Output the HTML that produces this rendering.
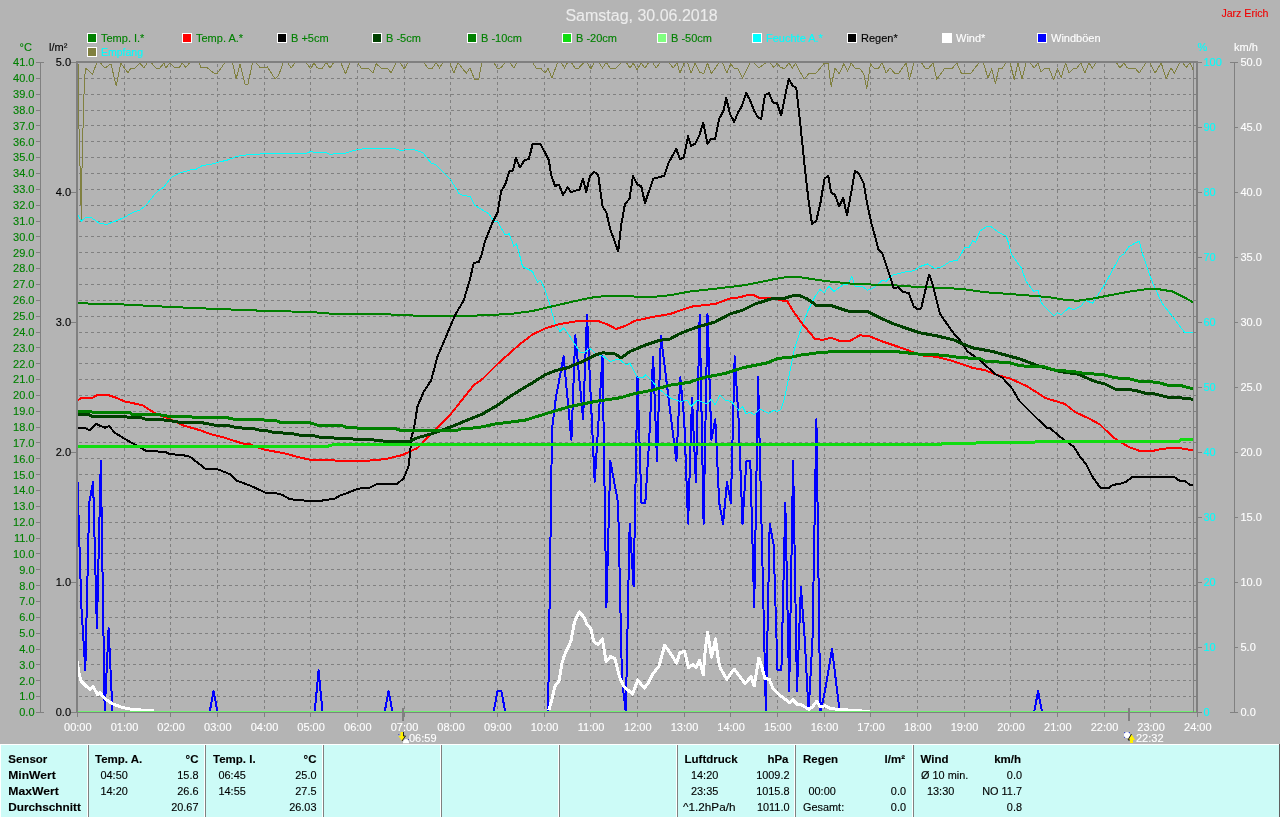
<!DOCTYPE html>
<html lang="de"><head><meta charset="utf-8"><title>Samstag, 30.06.2018</title>
<style>html,body{margin:0;padding:0;background:#b4b4b4;overflow:hidden}body{width:1280px;height:817px;position:relative;font-family:"Liberation Sans",Arial,sans-serif}svg{position:absolute;left:0;top:0;display:block;will-change:transform}text{font-family:"Liberation Sans",Arial,sans-serif;font-size:11px;stroke-width:.12px}.b{font-weight:bold;font-size:11.5px}.p{font-size:10.9px}</style></head><body>
<svg width="1280" height="817" viewBox="0 0 1280 817">
<rect x="0" y="0" width="1280" height="817" fill="#b4b4b4"/>
<g shape-rendering="crispEdges" stroke="#808080" stroke-width="1" fill="none">
<g stroke-dasharray="3 3">
<line x1="79" y1="696.5" x2="1191" y2="696.5"/>
<line x1="79" y1="680.5" x2="1191" y2="680.5"/>
<line x1="79" y1="664.5" x2="1191" y2="664.5"/>
<line x1="79" y1="649.5" x2="1191" y2="649.5"/>
<line x1="79" y1="633.5" x2="1191" y2="633.5"/>
<line x1="79" y1="617.5" x2="1191" y2="617.5"/>
<line x1="79" y1="601.5" x2="1191" y2="601.5"/>
<line x1="79" y1="585.5" x2="1191" y2="585.5"/>
<line x1="79" y1="569.5" x2="1191" y2="569.5"/>
<line x1="79" y1="553.5" x2="1191" y2="553.5"/>
<line x1="79" y1="538.5" x2="1191" y2="538.5"/>
<line x1="79" y1="522.5" x2="1191" y2="522.5"/>
<line x1="79" y1="506.5" x2="1191" y2="506.5"/>
<line x1="79" y1="490.5" x2="1191" y2="490.5"/>
<line x1="79" y1="474.5" x2="1191" y2="474.5"/>
<line x1="79" y1="458.5" x2="1191" y2="458.5"/>
<line x1="79" y1="442.5" x2="1191" y2="442.5"/>
<line x1="79" y1="427.5" x2="1191" y2="427.5"/>
<line x1="79" y1="411.5" x2="1191" y2="411.5"/>
<line x1="79" y1="395.5" x2="1191" y2="395.5"/>
<line x1="79" y1="379.5" x2="1191" y2="379.5"/>
<line x1="79" y1="363.5" x2="1191" y2="363.5"/>
<line x1="79" y1="347.5" x2="1191" y2="347.5"/>
<line x1="79" y1="332.5" x2="1191" y2="332.5"/>
<line x1="79" y1="316.5" x2="1191" y2="316.5"/>
<line x1="79" y1="300.5" x2="1191" y2="300.5"/>
<line x1="79" y1="284.5" x2="1191" y2="284.5"/>
<line x1="79" y1="268.5" x2="1191" y2="268.5"/>
<line x1="79" y1="252.5" x2="1191" y2="252.5"/>
<line x1="79" y1="236.5" x2="1191" y2="236.5"/>
<line x1="79" y1="221.5" x2="1191" y2="221.5"/>
<line x1="79" y1="205.5" x2="1191" y2="205.5"/>
<line x1="79" y1="189.5" x2="1191" y2="189.5"/>
<line x1="79" y1="173.5" x2="1191" y2="173.5"/>
<line x1="79" y1="157.5" x2="1191" y2="157.5"/>
<line x1="79" y1="141.5" x2="1191" y2="141.5"/>
<line x1="79" y1="125.5" x2="1191" y2="125.5"/>
<line x1="79" y1="110.5" x2="1191" y2="110.5"/>
<line x1="79" y1="94.5" x2="1191" y2="94.5"/>
<line x1="79" y1="78.5" x2="1191" y2="78.5"/>
<line x1="124.5" y1="64" x2="124.5" y2="711"/>
<line x1="170.5" y1="64" x2="170.5" y2="711"/>
<line x1="217.5" y1="64" x2="217.5" y2="711"/>
<line x1="264.5" y1="64" x2="264.5" y2="711"/>
<line x1="310.5" y1="64" x2="310.5" y2="711"/>
<line x1="357.5" y1="64" x2="357.5" y2="711"/>
<line x1="404.5" y1="64" x2="404.5" y2="711"/>
<line x1="450.5" y1="64" x2="450.5" y2="711"/>
<line x1="497.5" y1="64" x2="497.5" y2="711"/>
<line x1="544.5" y1="64" x2="544.5" y2="711"/>
<line x1="590.5" y1="64" x2="590.5" y2="711"/>
<line x1="637.5" y1="64" x2="637.5" y2="711"/>
<line x1="684.5" y1="64" x2="684.5" y2="711"/>
<line x1="730.5" y1="64" x2="730.5" y2="711"/>
<line x1="777.5" y1="64" x2="777.5" y2="711"/>
<line x1="824.5" y1="64" x2="824.5" y2="711"/>
<line x1="870.5" y1="64" x2="870.5" y2="711"/>
<line x1="917.5" y1="64" x2="917.5" y2="711"/>
<line x1="964.5" y1="64" x2="964.5" y2="711"/>
<line x1="1010.5" y1="64" x2="1010.5" y2="711"/>
<line x1="1057.5" y1="64" x2="1057.5" y2="711"/>
<line x1="1104.5" y1="64" x2="1104.5" y2="711"/>
<line x1="1150.5" y1="64" x2="1150.5" y2="711"/>
</g>
</g>
<g id="curves" shape-rendering="crispEdges">
<polyline points="78.0,62.5 78.8,121.0 79.9,161.0 81.4,219.5 82.1,161.0 83.2,121.0 84.3,84.0 85.4,68.0 92.5,74.0 97.0,62.5 100.0,62.5 105.0,68.0 111.0,63.8 116.2,86.0 120.8,63.0 128.0,73.0 131.0,68.0 135.0,68.0 140.0,63.0 143.8,68.0 147.5,62.5 151.0,62.5 156.0,68.0 160.0,68.0 163.8,63.0 166.0,68.0 170.0,62.5 173.8,67.0 178.8,68.0 182.5,63.0 185.8,67.5 190.0,62.5 198.8,62.5 201.0,67.5 207.5,68.0 213.8,73.0 217.5,73.0 225.0,62.5 232.5,62.5 236.2,78.8 240.0,63.8 245.0,84.2 248.0,84.2 252.5,62.5 256.0,62.5 260.0,67.5 265.0,68.0 267.5,67.0 275.0,78.8 278.8,75.0 283.2,62.5 287.5,62.5 291.2,68.0 295.0,62.5 306.0,62.5 310.8,68.8 313.8,63.0 317.5,68.0 322.5,68.0 326.2,62.5 330.0,68.0 333.8,62.5 341.0,63.0 345.5,73.8 350.0,62.5 357.5,62.5 361.2,68.0 368.8,68.8 373.0,73.2 376.2,63.8 381.2,68.0 387.5,68.0 391.2,73.0 396.2,62.5 400.0,62.5 404.2,68.8 408.0,62.5 423.8,62.5 428.0,68.0 432.5,68.0 436.2,62.5 439.5,68.0 443.0,62.5 450.0,63.0 453.8,73.0 458.0,62.5 466.2,73.2 470.0,68.0 474.5,79.2 478.8,79.2 481.8,62.5 493.8,62.5 497.5,68.8 501.2,67.5 505.0,62.5 510.0,62.5 513.8,68.0 517.0,62.5 532.5,62.5 536.2,68.0 541.2,68.8 545.0,73.2 548.0,68.0 551.8,78.0 557.5,63.0 561.2,62.5 564.5,68.0 567.5,62.5 571.2,62.5 575.0,68.0 578.8,68.0 583.8,62.5 587.5,63.0 590.8,68.8 594.2,62.5 598.8,62.5 602.5,68.0 606.2,62.5 610.0,68.0 616.2,68.0 621.2,62.5 626.2,62.5 630.0,68.0 633.2,63.0 637.0,69.5 641.2,63.0 645.0,68.0 648.8,62.5 652.5,62.5 656.2,68.0 660.0,62.5 668.8,62.5 673.2,68.0 677.0,63.0 680.0,73.0 684.2,63.0 687.5,62.5 691.2,73.0 695.0,63.0 699.5,72.0 703.8,73.8 707.5,63.0 711.2,73.8 718.8,63.0 722.5,62.5 726.8,73.0 730.8,63.8 733.8,68.0 738.0,68.8 742.5,78.0 750.0,63.0 753.8,62.5 758.8,68.0 766.2,62.5 770.0,62.5 773.8,67.5 777.5,63.0 780.0,67.0 784.5,68.8 788.8,63.0 792.5,68.0 795.5,63.0 798.8,70.0 804.2,78.8 808.8,73.8 816.2,73.0 823.8,63.8 828.0,63.0 831.2,86.2 835.0,68.0 839.2,73.8 843.8,63.8 847.5,71.2 851.2,63.0 855.0,68.0 859.2,68.0 863.8,73.8 866.8,88.8 870.5,63.8 873.8,68.0 878.8,68.0 882.0,62.5 886.2,73.0 890.0,68.0 894.5,73.0 898.2,73.8 906.2,63.0 909.5,79.2 913.8,63.0 921.2,62.5 925.0,68.0 928.8,68.0 933.0,63.0 936.8,79.2 945.0,68.0 952.5,68.0 956.8,63.0 961.2,73.0 971.2,73.0 978.8,63.0 983.2,62.5 988.0,78.0 991.8,68.8 995.5,83.8 998.8,68.0 1002.5,68.0 1006.2,62.5 1010.0,62.5 1014.2,79.2 1018.0,63.0 1022.0,78.8 1026.2,62.5 1030.0,62.5 1034.2,68.0 1038.0,63.0 1041.2,72.0 1045.0,68.0 1049.2,68.8 1053.8,80.0 1057.5,68.8 1061.2,77.5 1065.5,63.0 1069.2,73.0 1073.0,68.8 1076.8,68.0 1080.8,63.0 1085.0,73.0 1088.8,63.0 1092.5,68.0 1096.2,62.5 1116.2,62.5 1120.0,68.0 1123.8,63.0 1127.5,68.0 1135.0,68.0 1139.2,73.0 1146.2,62.5 1150.0,62.5 1155.0,73.0 1161.2,63.0 1166.2,78.8 1170.8,68.0 1174.5,73.0 1180.0,62.5 1182.5,62.5 1186.2,67.5 1190.0,62.5 1193.8,71.2" fill="none" stroke="#808040" stroke-width="1" stroke-linejoin="round" />
<polyline points="77.5,481.9 81.4,607.4 85.3,670.2 89.2,502.8 93.1,481.9 96.9,628.3 100.8,461.0 104.7,712.0 108.6,628.3 112.5,712.0" fill="none" stroke="#0000ff" stroke-width="2" stroke-linejoin="round" stroke-linejoin="miter"/>
<polyline points="209.7,712.0 213.6,691.1 217.5,712.0" fill="none" stroke="#0000ff" stroke-width="2" stroke-linejoin="round" stroke-linejoin="miter"/>
<polyline points="314.7,712.0 318.6,670.2 322.5,712.0" fill="none" stroke="#0000ff" stroke-width="2" stroke-linejoin="round" stroke-linejoin="miter"/>
<polyline points="384.7,712.0 388.6,691.1 392.5,712.0" fill="none" stroke="#0000ff" stroke-width="2" stroke-linejoin="round" stroke-linejoin="miter"/>
<polyline points="493.6,712.0 497.5,691.1 501.4,691.1 505.3,712.0" fill="none" stroke="#0000ff" stroke-width="2" stroke-linejoin="round" stroke-linejoin="miter"/>
<polyline points="548.1,712.0 552.0,429.6 555.8,398.2 559.7,377.3 563.6,356.4 567.5,398.2 571.4,440.0 575.3,335.4 579.2,377.3 583.1,419.1 587.0,314.5 590.8,398.2 594.7,481.9 598.6,419.1 602.5,356.4 606.4,607.4 610.3,461.0 614.2,481.9 618.1,502.8 622.0,680.6 625.8,712.0 629.7,523.7 633.6,586.5 637.5,377.3 641.4,502.8 645.3,502.8 649.2,440.0 653.1,356.4 657.0,461.0 660.9,335.4 664.7,366.8 668.6,398.2 672.5,429.6 676.4,461.0 680.3,377.3 684.2,419.1 688.1,523.7 692.0,398.2 695.9,481.9 699.7,314.5 703.6,523.7 707.5,314.5 711.4,440.0 715.3,419.1 719.2,502.8 723.1,523.7 727.0,481.9 730.9,502.8 734.7,356.4 738.6,419.1 742.5,523.7 746.4,461.0 750.3,461.0 754.2,607.4 758.1,377.3 762.0,544.6 765.9,712.0 769.7,523.7 773.6,544.6 777.5,670.2 781.4,670.2 785.3,502.8 789.2,691.1 793.1,461.0 797.0,691.1 800.9,586.5 804.7,638.8 808.6,712.0 812.5,638.8 816.4,419.1 820.3,712.0 824.2,695.3 828.1,672.3 832.0,649.2 835.9,680.6 839.7,712.0" fill="none" stroke="#0000ff" stroke-width="2" stroke-linejoin="round" stroke-linejoin="miter"/>
<polyline points="1034.2,712.0 1038.1,691.1 1042.0,712.0" fill="none" stroke="#0000ff" stroke-width="2" stroke-linejoin="round" stroke-linejoin="miter"/>
<polyline points="77.0,661.2 78.8,672.5 81.2,681.2 86.2,686.2 90.0,689.5 93.0,686.2 97.5,694.5 100.0,692.5 105.0,698.8 112.5,703.8 122.5,707.5 132.5,709.5 153.8,710.8" fill="none" stroke="#ffffff" stroke-width="3" stroke-linejoin="round" />
<polyline points="548.8,710.2 551.8,700.0 554.7,686.7 559.1,680.8 562.0,663.2 564.2,655.8 570.9,641.0 574.5,622.0 579.4,611.8 584.1,617.6 587.0,624.2 590.7,628.0 593.6,641.0 598.0,644.8 602.4,639.0 606.1,661.7 610.5,656.6 614.9,658.8 619.3,676.4 623.8,686.7 632.6,694.0 637.7,680.0 644.3,688.2 648.7,682.3 653.1,673.5 659.0,666.1 664.6,645.5 669.3,651.4 676.6,663.2 679.6,652.9 684.7,651.4 688.4,667.6 692.9,664.6 695.9,667.6 699.5,660.2 703.2,675.0 705.4,648.5 707.6,632.3 711.6,657.3 715.4,639.0 718.6,661.7 720.1,667.6 726.7,679.3 734.1,669.0 745.1,683.8 751.0,676.4 754.2,686.0 758.8,658.0 762.0,667.6 764.9,678.6 769.3,679.3 773.0,688.2 778.2,694.0 784.0,698.4 789.9,702.9 792.9,699.9 797.3,704.3 801.7,705.0 809.0,709.5 812.7,706.5 816.7,701.4 820.0,706.5 825.2,705.8 831.0,708.7 850.0,710.2 870.0,711.5" fill="none" stroke="#ffffff" stroke-width="3" stroke-linejoin="round" />
<polyline points="77.0,212.5 81.2,221.2 86.2,217.0 91.2,217.5 100.0,223.8 107.5,224.2 115.0,221.2 124.2,217.5 132.5,212.5 140.0,210.0 146.2,205.0 156.2,192.5 163.8,187.0 171.2,177.5 180.0,173.0 190.0,170.0 196.2,169.2 202.5,165.5 210.0,164.5 217.5,162.5 227.5,160.0 237.5,156.2 250.0,154.5 264.2,153.8 285.0,153.2 306.2,153.2 310.8,151.5 315.0,152.5 326.2,152.5 330.8,155.0 335.0,153.2 345.0,153.2 357.5,149.5 370.0,148.0 393.8,148.0 400.0,150.5 407.5,149.5 415.0,150.0 422.5,152.5 431.2,163.0 436.2,165.0 450.8,180.0 458.8,193.2 463.8,195.8 470.0,196.2 475.0,205.5 482.5,210.0 488.8,213.8 493.8,221.2 497.5,221.2 505.0,235.0 509.2,233.8 513.8,246.2 516.2,243.8 517.5,246.5 522.5,266.5 532.5,271.5 537.5,282.0 540.8,280.2 545.0,290.2 550.0,305.2 555.0,323.5 560.0,331.5 563.8,327.8 570.0,336.5 580.0,352.2 585.0,352.2 590.0,348.5 596.2,354.0 603.8,356.5 610.0,361.5 618.8,359.0 626.2,364.8 630.0,363.5 637.5,377.8 642.5,377.8 645.8,374.8 652.5,381.5 657.5,387.8 670.0,397.8 680.0,401.5 687.5,400.2 691.2,406.5 697.5,400.2 707.5,404.0 711.2,399.0 715.0,404.8 720.0,395.2 725.0,400.2 731.2,401.5 738.8,410.2 742.5,406.5 746.2,414.0 750.0,412.0 754.2,414.8 760.0,409.0 768.8,413.2 773.8,410.2 777.5,411.5 781.2,409.0 785.0,396.5 790.0,371.5 793.8,351.5 800.0,331.5 807.5,311.5 815.0,296.5 820.0,289.5 824.2,292.8 828.8,286.5 833.8,291.5 842.5,285.2 848.0,284.0 851.8,276.5 855.0,286.0 862.5,286.5 867.5,290.2 873.8,287.8 882.5,280.2 886.2,281.5 892.5,275.2 905.0,272.0 913.8,270.8 920.0,266.5 927.5,264.0 935.0,268.5 942.5,266.5 950.0,261.5 957.5,260.2 961.2,254.0 965.0,247.0 968.8,247.8 972.5,241.0 975.5,242.2 980.0,231.0 986.2,226.8 991.2,226.8 998.8,232.5 1006.2,236.2 1008.8,243.8 1011.2,254.0 1021.2,267.8 1026.2,281.5 1033.8,291.5 1038.0,290.2 1041.2,302.8 1053.8,316.0 1057.5,312.8 1061.2,314.8 1068.8,307.8 1073.8,309.5 1081.2,306.0 1085.0,300.2 1092.5,303.2 1105.0,284.0 1120.0,256.5 1123.8,254.0 1128.8,246.8 1135.0,243.2 1139.2,241.2 1142.5,254.0 1143.8,257.8 1152.5,282.8 1162.5,304.0 1172.5,316.5 1180.0,326.5 1185.0,332.8 1193.0,332.8" fill="none" stroke="#00ffff" stroke-width="1" stroke-linejoin="round" />
<polyline points="77.0,303.2 124.2,304.5 170.8,307.0 217.5,309.0 264.2,310.8 310.8,312.0 335.0,314.0 380.0,314.0 420.0,315.8 470.0,315.8 510.0,314.0 532.5,311.0 560.0,304.5 590.0,297.8 607.5,295.8 652.5,297.0 670.0,295.2 690.0,291.5 712.5,289.0 745.0,285.2 775.0,279.0 790.0,276.5 800.0,277.2 825.0,281.0 855.0,284.0 892.5,285.2 917.5,287.0 942.5,287.8 962.5,289.0 985.0,292.2 1010.0,294.0 1047.5,297.0 1065.0,299.8 1077.5,300.8 1095.0,298.2 1110.0,295.2 1130.0,291.5 1147.5,289.0 1157.5,289.0 1172.5,291.5 1185.0,297.8 1193.8,302.8" fill="none" stroke="#008000" stroke-width="2" stroke-linejoin="round" />
<polyline points="77.0,401.0 81.2,397.8 92.5,397.8 97.5,394.8 107.5,394.8 116.2,397.8 125.0,401.5 142.5,405.2 156.2,414.0 170.0,419.0 182.5,425.2 200.0,430.2 210.0,434.0 225.0,437.8 242.5,443.5 250.0,444.2 262.5,449.2 285.0,453.5 300.0,457.5 310.0,459.8 335.0,460.5 370.0,460.5 385.0,459.2 402.5,455.0 417.5,448.0 433.8,431.5 450.8,414.0 473.8,385.2 482.5,379.0 497.5,364.0 520.0,344.0 532.5,334.5 545.0,328.5 560.0,324.0 575.0,321.5 597.5,320.8 607.5,324.5 616.2,329.0 625.0,326.0 635.0,320.8 652.5,317.0 670.0,314.0 690.0,307.2 692.5,306.5 715.0,304.0 730.0,298.5 740.0,297.2 747.5,295.2 753.8,295.2 760.0,298.2 775.0,297.8 780.0,300.2 787.5,301.5 792.5,310.2 802.5,324.0 815.0,339.0 822.5,339.8 831.2,337.8 840.0,341.0 848.8,341.5 860.0,335.2 870.0,336.5 882.5,341.5 897.5,346.5 910.0,351.0 920.0,355.2 937.5,357.0 952.5,361.0 960.0,363.5 972.5,367.8 985.0,370.2 997.5,375.2 1010.0,378.5 1027.5,386.5 1045.0,397.8 1055.0,401.0 1065.0,404.0 1075.0,412.0 1090.0,419.0 1100.0,424.5 1112.5,436.8 1120.0,441.8 1130.0,447.5 1140.0,451.0 1152.5,451.0 1160.0,449.2 1170.0,448.0 1180.0,448.0 1185.0,449.2 1193.8,450.0" fill="none" stroke="#ff0000" stroke-width="2" stroke-linejoin="round" />
<polyline points="77.0,428.2 85.0,428.2 90.0,430.2 96.2,424.0 105.0,427.8 108.8,426.0 115.0,432.8 125.0,439.0 133.8,444.0 146.2,451.0 165.0,451.8 170.0,454.2 182.5,455.0 190.0,456.8 205.0,468.5 217.5,469.2 230.0,474.2 236.2,480.5 250.0,485.5 265.0,492.5 275.0,493.0 282.5,495.0 290.0,499.2 303.8,500.5 322.5,500.5 335.0,498.5 340.0,495.5 347.5,493.0 357.5,488.8 370.0,487.5 377.5,483.8 397.5,483.8 403.8,478.0 408.8,465.5 410.8,445.5 411.2,438.0 413.8,429.0 417.5,406.5 423.8,391.5 431.2,380.2 437.5,356.5 445.0,339.0 455.0,315.2 463.8,300.2 470.0,279.0 473.8,262.8 478.8,262.0 481.8,254.0 485.0,241.2 492.5,222.5 497.5,212.5 501.2,191.2 505.0,185.0 509.5,171.2 513.0,170.5 515.8,158.0 520.0,167.5 524.5,160.0 528.8,159.2 532.5,144.5 540.5,144.0 548.8,160.0 551.2,175.0 555.0,185.8 559.2,185.0 563.0,195.0 567.5,187.5 571.2,192.0 579.5,189.5 583.0,178.8 586.2,192.0 590.0,176.2 594.2,171.8 598.2,175.0 602.5,206.2 606.2,212.0 610.5,230.0 618.2,251.2 621.2,225.0 625.0,203.8 629.5,198.8 633.0,176.2 637.5,184.5 641.2,186.2 645.0,203.0 653.2,178.8 664.2,175.8 668.8,162.5 676.2,148.8 680.0,159.2 683.8,157.5 688.0,136.2 691.2,145.8 695.0,143.8 699.5,135.0 703.2,122.5 707.5,143.8 711.2,138.8 715.0,139.5 719.2,118.8 723.8,110.0 726.2,98.0 730.0,113.8 734.2,122.0 738.0,112.5 741.2,107.5 746.2,93.0 750.0,100.0 753.8,110.0 758.0,117.5 761.2,118.8 765.0,95.0 768.8,93.0 773.0,102.5 777.0,103.0 781.2,115.5 785.0,96.2 788.8,78.8 793.0,86.2 796.2,87.5 798.8,110.0 802.5,145.0 805.0,170.0 808.8,202.5 812.0,223.8 816.2,221.2 820.5,202.5 824.5,178.8 828.2,175.8 831.2,192.5 835.0,195.0 839.2,206.2 843.2,198.0 847.0,215.5 851.2,192.5 855.0,170.8 858.8,173.8 863.8,183.8 867.0,202.5 871.2,222.5 875.0,236.2 878.2,248.8 882.5,254.0 890.0,276.5 893.8,288.5 898.2,287.0 902.5,291.5 908.8,293.2 913.8,306.5 917.5,309.0 921.2,308.5 925.0,291.5 929.2,274.5 932.5,284.0 940.0,314.0 955.0,335.2 960.0,340.2 967.5,351.5 980.0,360.2 995.0,374.0 1002.5,377.8 1012.5,389.0 1018.8,400.2 1032.5,414.0 1046.2,427.5 1050.0,428.0 1060.0,436.8 1073.8,446.8 1080.0,456.8 1086.2,464.2 1092.5,476.8 1100.5,488.0 1108.8,488.0 1112.5,485.0 1120.0,483.8 1126.2,481.8 1132.5,476.8 1173.8,476.8 1180.0,481.0 1185.0,481.0 1190.0,485.0 1193.8,485.0" fill="none" stroke="#000000" stroke-width="2" stroke-linejoin="round" />
<polyline points="77.0,414.0 87.5,414.0 92.5,416.5 140.0,417.2 145.0,419.0 167.5,420.2 177.5,422.0 202.5,422.8 215.0,425.2 230.0,426.0 237.5,427.8 252.5,428.5 260.0,430.2 267.5,430.8 275.0,432.8 290.0,433.2 300.0,435.2 315.0,436.0 322.5,437.8 345.0,438.2 352.5,439.0 370.0,439.5 382.5,441.0 410.0,441.0 417.5,437.8 435.0,432.8 455.0,425.2 470.0,419.0 482.5,414.0 497.5,405.2 510.0,396.5 520.0,390.2 532.5,382.8 545.0,374.8 555.0,370.8 567.5,367.8 582.5,361.5 595.0,355.2 602.5,352.8 615.0,354.0 621.2,357.8 630.0,351.5 645.0,345.2 660.0,340.2 670.0,339.0 680.0,333.5 695.0,327.8 715.0,322.0 730.0,314.0 742.5,310.2 755.0,304.0 772.5,298.5 785.0,298.2 792.5,295.8 800.0,295.8 807.5,299.0 816.2,305.2 832.5,306.0 847.5,311.0 867.5,311.5 880.0,317.8 892.5,323.5 905.0,327.8 920.0,332.8 937.5,336.0 955.0,340.2 960.0,342.8 972.5,347.8 992.5,351.5 1020.0,359.0 1040.0,366.5 1060.0,371.5 1077.5,374.0 1095.0,381.5 1105.0,384.0 1115.0,389.0 1135.0,390.2 1145.0,393.2 1155.0,394.0 1167.5,397.2 1190.0,398.5 1193.8,400.2" fill="none" stroke="#004000" stroke-width="3" stroke-linejoin="round" />
<polyline points="77.0,411.5 90.0,411.5 95.0,412.8 130.0,412.8 132.5,414.8 160.0,414.8 170.0,416.5 200.0,417.2 225.0,417.2 235.0,419.5 275.0,420.2 280.0,422.2 310.0,422.8 317.5,425.2 342.5,425.8 347.5,427.8 380.0,428.5 395.0,428.5 400.0,430.2 457.5,430.2 462.5,428.5 477.5,427.8 495.0,424.0 525.0,420.2 545.0,414.0 570.0,406.5 595.0,401.5 620.0,397.8 635.0,393.5 652.5,390.2 670.0,385.2 690.0,382.2 692.5,381.0 705.0,377.2 725.0,373.5 742.5,367.8 767.5,362.8 777.5,358.5 792.5,357.0 800.0,355.2 817.5,352.8 835.0,351.5 895.0,351.5 917.5,354.0 942.5,355.2 962.5,357.8 980.0,358.5 985.0,361.0 1010.0,362.8 1020.0,365.8 1045.0,367.0 1055.0,370.2 1072.5,371.5 1085.0,373.5 1102.5,374.5 1115.0,377.8 1130.0,379.0 1140.0,381.5 1157.5,382.2 1167.5,385.2 1182.5,386.0 1193.8,389.0" fill="none" stroke="#008000" stroke-width="3" stroke-linejoin="round" />
<polyline points="77.0,446.2 328.0,446.2 332.0,445.0 400.0,444.8 940.0,444.8 942.0,443.3 1034.0,442.5 1036.0,441.5 1179.0,441.3 1181.0,439.5 1193.8,439.5" fill="none" stroke="#10dc10" stroke-width="3" stroke-linejoin="round" />
</g>
<g shape-rendering="crispEdges" fill="#808080" stroke="none">
<rect x="76" y="61" width="2" height="652"/>
<rect x="76" y="61" width="1122" height="2"/>
<rect x="1196" y="61" width="2" height="652"/>
<rect x="76" y="712" width="1122" height="1"/>
<rect x="78" y="711" width="1118" height="1" fill="#70ee70"/>
<rect x="1193" y="63" width="1" height="649"/>
<rect x="1193" y="712" width="3" height="1"/>
<rect x="36" y="712" width="8" height="1"/>
<rect x="1193" y="696" width="3" height="1"/>
<rect x="36" y="696" width="4" height="1"/>
<rect x="1193" y="680" width="3" height="1"/>
<rect x="36" y="680" width="4" height="1"/>
<rect x="1193" y="664" width="3" height="1"/>
<rect x="36" y="664" width="4" height="1"/>
<rect x="1193" y="649" width="3" height="1"/>
<rect x="36" y="649" width="4" height="1"/>
<rect x="1193" y="633" width="3" height="1"/>
<rect x="36" y="633" width="4" height="1"/>
<rect x="1193" y="617" width="3" height="1"/>
<rect x="36" y="617" width="4" height="1"/>
<rect x="1193" y="601" width="3" height="1"/>
<rect x="36" y="601" width="4" height="1"/>
<rect x="1193" y="585" width="3" height="1"/>
<rect x="36" y="585" width="4" height="1"/>
<rect x="1193" y="569" width="3" height="1"/>
<rect x="36" y="569" width="4" height="1"/>
<rect x="1193" y="553" width="3" height="1"/>
<rect x="36" y="553" width="4" height="1"/>
<rect x="1193" y="538" width="3" height="1"/>
<rect x="36" y="538" width="4" height="1"/>
<rect x="1193" y="522" width="3" height="1"/>
<rect x="36" y="522" width="4" height="1"/>
<rect x="1193" y="506" width="3" height="1"/>
<rect x="36" y="506" width="4" height="1"/>
<rect x="1193" y="490" width="3" height="1"/>
<rect x="36" y="490" width="4" height="1"/>
<rect x="1193" y="474" width="3" height="1"/>
<rect x="36" y="474" width="4" height="1"/>
<rect x="1193" y="458" width="3" height="1"/>
<rect x="36" y="458" width="4" height="1"/>
<rect x="1193" y="442" width="3" height="1"/>
<rect x="36" y="442" width="4" height="1"/>
<rect x="1193" y="427" width="3" height="1"/>
<rect x="36" y="427" width="4" height="1"/>
<rect x="1193" y="411" width="3" height="1"/>
<rect x="36" y="411" width="4" height="1"/>
<rect x="1193" y="395" width="3" height="1"/>
<rect x="36" y="395" width="4" height="1"/>
<rect x="1193" y="379" width="3" height="1"/>
<rect x="36" y="379" width="4" height="1"/>
<rect x="1193" y="363" width="3" height="1"/>
<rect x="36" y="363" width="4" height="1"/>
<rect x="1193" y="347" width="3" height="1"/>
<rect x="36" y="347" width="4" height="1"/>
<rect x="1193" y="332" width="3" height="1"/>
<rect x="36" y="332" width="4" height="1"/>
<rect x="1193" y="316" width="3" height="1"/>
<rect x="36" y="316" width="4" height="1"/>
<rect x="1193" y="300" width="3" height="1"/>
<rect x="36" y="300" width="4" height="1"/>
<rect x="1193" y="284" width="3" height="1"/>
<rect x="36" y="284" width="4" height="1"/>
<rect x="1193" y="268" width="3" height="1"/>
<rect x="36" y="268" width="4" height="1"/>
<rect x="1193" y="252" width="3" height="1"/>
<rect x="36" y="252" width="4" height="1"/>
<rect x="1193" y="236" width="3" height="1"/>
<rect x="36" y="236" width="4" height="1"/>
<rect x="1193" y="221" width="3" height="1"/>
<rect x="36" y="221" width="4" height="1"/>
<rect x="1193" y="205" width="3" height="1"/>
<rect x="36" y="205" width="4" height="1"/>
<rect x="1193" y="189" width="3" height="1"/>
<rect x="36" y="189" width="4" height="1"/>
<rect x="1193" y="173" width="3" height="1"/>
<rect x="36" y="173" width="4" height="1"/>
<rect x="1193" y="157" width="3" height="1"/>
<rect x="36" y="157" width="4" height="1"/>
<rect x="1193" y="141" width="3" height="1"/>
<rect x="36" y="141" width="4" height="1"/>
<rect x="1193" y="125" width="3" height="1"/>
<rect x="36" y="125" width="4" height="1"/>
<rect x="1193" y="110" width="3" height="1"/>
<rect x="36" y="110" width="4" height="1"/>
<rect x="1193" y="94" width="3" height="1"/>
<rect x="36" y="94" width="4" height="1"/>
<rect x="1193" y="78" width="3" height="1"/>
<rect x="36" y="78" width="4" height="1"/>
<rect x="1193" y="62" width="3" height="1"/>
<rect x="36" y="62" width="8" height="1"/>
<rect x="40" y="62" width="1" height="651"/>
<rect x="71" y="62" width="5" height="1"/>
<rect x="71" y="192" width="5" height="1"/>
<rect x="71" y="322" width="5" height="1"/>
<rect x="71" y="452" width="5" height="1"/>
<rect x="71" y="582" width="5" height="1"/>
<rect x="71" y="712" width="5" height="1"/>
<rect x="1198" y="62" width="4" height="1"/>
<rect x="1230" y="62" width="8" height="1"/>
<rect x="1198" y="127" width="4" height="1"/>
<rect x="1234" y="127" width="4" height="1"/>
<rect x="1198" y="192" width="4" height="1"/>
<rect x="1234" y="192" width="4" height="1"/>
<rect x="1198" y="257" width="4" height="1"/>
<rect x="1234" y="257" width="4" height="1"/>
<rect x="1198" y="322" width="4" height="1"/>
<rect x="1234" y="322" width="4" height="1"/>
<rect x="1198" y="387" width="4" height="1"/>
<rect x="1234" y="387" width="4" height="1"/>
<rect x="1198" y="452" width="4" height="1"/>
<rect x="1234" y="452" width="4" height="1"/>
<rect x="1198" y="517" width="4" height="1"/>
<rect x="1234" y="517" width="4" height="1"/>
<rect x="1198" y="582" width="4" height="1"/>
<rect x="1234" y="582" width="4" height="1"/>
<rect x="1198" y="647" width="4" height="1"/>
<rect x="1234" y="647" width="4" height="1"/>
<rect x="1198" y="712" width="4" height="1"/>
<rect x="1230" y="712" width="8" height="1"/>
<rect x="1234" y="62" width="1" height="651"/>
<rect x="77" y="712" width="1" height="5"/>
<rect x="124" y="712" width="1" height="5"/>
<rect x="170" y="712" width="1" height="5"/>
<rect x="217" y="712" width="1" height="5"/>
<rect x="264" y="712" width="1" height="5"/>
<rect x="310" y="712" width="1" height="5"/>
<rect x="357" y="712" width="1" height="5"/>
<rect x="404" y="712" width="1" height="5"/>
<rect x="450" y="712" width="1" height="5"/>
<rect x="497" y="712" width="1" height="5"/>
<rect x="544" y="712" width="1" height="5"/>
<rect x="590" y="712" width="1" height="5"/>
<rect x="637" y="712" width="1" height="5"/>
<rect x="684" y="712" width="1" height="5"/>
<rect x="730" y="712" width="1" height="5"/>
<rect x="777" y="712" width="1" height="5"/>
<rect x="824" y="712" width="1" height="5"/>
<rect x="870" y="712" width="1" height="5"/>
<rect x="917" y="712" width="1" height="5"/>
<rect x="964" y="712" width="1" height="5"/>
<rect x="1010" y="712" width="1" height="5"/>
<rect x="1057" y="712" width="1" height="5"/>
<rect x="1104" y="712" width="1" height="5"/>
<rect x="1150" y="712" width="1" height="5"/>
<rect x="1197" y="712" width="1" height="5"/>
<rect x="402" y="708" width="2" height="13"/>
<rect x="1128" y="708" width="2" height="13"/>
</g>
<g id="labels">
<text x="34.5" y="716.3" text-anchor="end" fill="#008000" stroke="#008000">0.0</text>
<text x="34.5" y="700.4" text-anchor="end" fill="#008000" stroke="#008000">1.0</text>
<text x="34.5" y="684.6" text-anchor="end" fill="#008000" stroke="#008000">2.0</text>
<text x="34.5" y="668.7" text-anchor="end" fill="#008000" stroke="#008000">3.0</text>
<text x="34.5" y="652.9" text-anchor="end" fill="#008000" stroke="#008000">4.0</text>
<text x="34.5" y="637.0" text-anchor="end" fill="#008000" stroke="#008000">5.0</text>
<text x="34.5" y="621.2" text-anchor="end" fill="#008000" stroke="#008000">6.0</text>
<text x="34.5" y="605.3" text-anchor="end" fill="#008000" stroke="#008000">7.0</text>
<text x="34.5" y="589.5" text-anchor="end" fill="#008000" stroke="#008000">8.0</text>
<text x="34.5" y="573.6" text-anchor="end" fill="#008000" stroke="#008000">9.0</text>
<text x="34.5" y="557.8" text-anchor="end" fill="#008000" stroke="#008000">10.0</text>
<text x="34.5" y="541.9" text-anchor="end" fill="#008000" stroke="#008000">11.0</text>
<text x="34.5" y="526.1" text-anchor="end" fill="#008000" stroke="#008000">12.0</text>
<text x="34.5" y="510.2" text-anchor="end" fill="#008000" stroke="#008000">13.0</text>
<text x="34.5" y="494.3" text-anchor="end" fill="#008000" stroke="#008000">14.0</text>
<text x="34.5" y="478.5" text-anchor="end" fill="#008000" stroke="#008000">15.0</text>
<text x="34.5" y="462.6" text-anchor="end" fill="#008000" stroke="#008000">16.0</text>
<text x="34.5" y="446.8" text-anchor="end" fill="#008000" stroke="#008000">17.0</text>
<text x="34.5" y="430.9" text-anchor="end" fill="#008000" stroke="#008000">18.0</text>
<text x="34.5" y="415.1" text-anchor="end" fill="#008000" stroke="#008000">19.0</text>
<text x="34.5" y="399.2" text-anchor="end" fill="#008000" stroke="#008000">20.0</text>
<text x="34.5" y="383.4" text-anchor="end" fill="#008000" stroke="#008000">21.0</text>
<text x="34.5" y="367.5" text-anchor="end" fill="#008000" stroke="#008000">22.0</text>
<text x="34.5" y="351.7" text-anchor="end" fill="#008000" stroke="#008000">23.0</text>
<text x="34.5" y="335.8" text-anchor="end" fill="#008000" stroke="#008000">24.0</text>
<text x="34.5" y="320.0" text-anchor="end" fill="#008000" stroke="#008000">25.0</text>
<text x="34.5" y="304.1" text-anchor="end" fill="#008000" stroke="#008000">26.0</text>
<text x="34.5" y="288.3" text-anchor="end" fill="#008000" stroke="#008000">27.0</text>
<text x="34.5" y="272.4" text-anchor="end" fill="#008000" stroke="#008000">28.0</text>
<text x="34.5" y="256.5" text-anchor="end" fill="#008000" stroke="#008000">29.0</text>
<text x="34.5" y="240.7" text-anchor="end" fill="#008000" stroke="#008000">30.0</text>
<text x="34.5" y="224.8" text-anchor="end" fill="#008000" stroke="#008000">31.0</text>
<text x="34.5" y="209.0" text-anchor="end" fill="#008000" stroke="#008000">32.0</text>
<text x="34.5" y="193.1" text-anchor="end" fill="#008000" stroke="#008000">33.0</text>
<text x="34.5" y="177.3" text-anchor="end" fill="#008000" stroke="#008000">34.0</text>
<text x="34.5" y="161.4" text-anchor="end" fill="#008000" stroke="#008000">35.0</text>
<text x="34.5" y="145.6" text-anchor="end" fill="#008000" stroke="#008000">36.0</text>
<text x="34.5" y="129.7" text-anchor="end" fill="#008000" stroke="#008000">37.0</text>
<text x="34.5" y="113.9" text-anchor="end" fill="#008000" stroke="#008000">38.0</text>
<text x="34.5" y="98.0" text-anchor="end" fill="#008000" stroke="#008000">39.0</text>
<text x="34.5" y="82.2" text-anchor="end" fill="#008000" stroke="#008000">40.0</text>
<text x="34.5" y="66.3" text-anchor="end" fill="#008000" stroke="#008000">41.0</text>
<text x="71" y="66.3" text-anchor="end" fill="#000" stroke="#000">5.0</text>
<text x="71" y="196.3" text-anchor="end" fill="#000" stroke="#000">4.0</text>
<text x="71" y="326.3" text-anchor="end" fill="#000" stroke="#000">3.0</text>
<text x="71" y="456.3" text-anchor="end" fill="#000" stroke="#000">2.0</text>
<text x="71" y="586.3" text-anchor="end" fill="#000" stroke="#000">1.0</text>
<text x="71" y="716.3" text-anchor="end" fill="#000" stroke="#000">0.0</text>
<text x="1203.5" y="66.3" fill="#00ffff" stroke="#00ffff">100</text>
<text x="1240.5" y="66.3" fill="#fff" stroke="#fff">50.0</text>
<text x="1203.5" y="131.3" fill="#00ffff" stroke="#00ffff">90</text>
<text x="1240.5" y="131.3" fill="#fff" stroke="#fff">45.0</text>
<text x="1203.5" y="196.3" fill="#00ffff" stroke="#00ffff">80</text>
<text x="1240.5" y="196.3" fill="#fff" stroke="#fff">40.0</text>
<text x="1203.5" y="261.3" fill="#00ffff" stroke="#00ffff">70</text>
<text x="1240.5" y="261.3" fill="#fff" stroke="#fff">35.0</text>
<text x="1203.5" y="326.3" fill="#00ffff" stroke="#00ffff">60</text>
<text x="1240.5" y="326.3" fill="#fff" stroke="#fff">30.0</text>
<text x="1203.5" y="391.3" fill="#00ffff" stroke="#00ffff">50</text>
<text x="1240.5" y="391.3" fill="#fff" stroke="#fff">25.0</text>
<text x="1203.5" y="456.3" fill="#00ffff" stroke="#00ffff">40</text>
<text x="1240.5" y="456.3" fill="#fff" stroke="#fff">20.0</text>
<text x="1203.5" y="521.3" fill="#00ffff" stroke="#00ffff">30</text>
<text x="1240.5" y="521.3" fill="#fff" stroke="#fff">15.0</text>
<text x="1203.5" y="586.3" fill="#00ffff" stroke="#00ffff">20</text>
<text x="1240.5" y="586.3" fill="#fff" stroke="#fff">10.0</text>
<text x="1203.5" y="651.3" fill="#00ffff" stroke="#00ffff">10</text>
<text x="1240.5" y="651.3" fill="#fff" stroke="#fff">5.0</text>
<text x="1203.5" y="716.3" fill="#00ffff" stroke="#00ffff">0</text>
<text x="1240.5" y="716.3" fill="#fff" stroke="#fff">0.0</text>
<text x="19.5" y="50.5" fill="#008000" stroke="#008000">°C</text>
<text x="49" y="50.5" fill="#000" stroke="#000">l/m²</text>
<text x="1197.5" y="50.5" fill="#00ffff" stroke="#00ffff">%</text>
<text x="1234" y="50.5" fill="#fff" stroke="#fff">km/h</text>
<text x="77.8" y="731" text-anchor="middle" fill="#fff" stroke="#fff">00:00</text>
<text x="124.5" y="731" text-anchor="middle" fill="#fff" stroke="#fff">01:00</text>
<text x="171.1" y="731" text-anchor="middle" fill="#fff" stroke="#fff">02:00</text>
<text x="217.8" y="731" text-anchor="middle" fill="#fff" stroke="#fff">03:00</text>
<text x="264.5" y="731" text-anchor="middle" fill="#fff" stroke="#fff">04:00</text>
<text x="311.1" y="731" text-anchor="middle" fill="#fff" stroke="#fff">05:00</text>
<text x="357.8" y="731" text-anchor="middle" fill="#fff" stroke="#fff">06:00</text>
<text x="404.5" y="731" text-anchor="middle" fill="#fff" stroke="#fff">07:00</text>
<text x="451.1" y="731" text-anchor="middle" fill="#fff" stroke="#fff">08:00</text>
<text x="497.8" y="731" text-anchor="middle" fill="#fff" stroke="#fff">09:00</text>
<text x="544.5" y="731" text-anchor="middle" fill="#fff" stroke="#fff">10:00</text>
<text x="591.1" y="731" text-anchor="middle" fill="#fff" stroke="#fff">11:00</text>
<text x="637.8" y="731" text-anchor="middle" fill="#fff" stroke="#fff">12:00</text>
<text x="684.5" y="731" text-anchor="middle" fill="#fff" stroke="#fff">13:00</text>
<text x="731.1" y="731" text-anchor="middle" fill="#fff" stroke="#fff">14:00</text>
<text x="777.8" y="731" text-anchor="middle" fill="#fff" stroke="#fff">15:00</text>
<text x="824.5" y="731" text-anchor="middle" fill="#fff" stroke="#fff">16:00</text>
<text x="871.1" y="731" text-anchor="middle" fill="#fff" stroke="#fff">17:00</text>
<text x="917.8" y="731" text-anchor="middle" fill="#fff" stroke="#fff">18:00</text>
<text x="964.5" y="731" text-anchor="middle" fill="#fff" stroke="#fff">19:00</text>
<text x="1011.1" y="731" text-anchor="middle" fill="#fff" stroke="#fff">20:00</text>
<text x="1057.8" y="731" text-anchor="middle" fill="#fff" stroke="#fff">21:00</text>
<text x="1104.5" y="731" text-anchor="middle" fill="#fff" stroke="#fff">22:00</text>
<text x="1151.1" y="731" text-anchor="middle" fill="#fff" stroke="#fff">23:00</text>
<text x="1197.8" y="731" text-anchor="middle" fill="#fff" stroke="#fff">24:00</text>
<text x="409" y="741.6" fill="#fff" stroke="#fff">06:59</text>
<text x="1136" y="741.6" fill="#fff" stroke="#fff">22:32</text>
<text x="641.5" y="20.5" text-anchor="middle" fill="#ececec" stroke="#ececec" style="font-size:16px">Samstag, 30.06.2018</text>
<text x="1268.5" y="16.5" text-anchor="end" fill="#f00000" stroke="#f00000" style="font-size:10.6px">Jarz Erich</text>
</g>
<g id="legend">
<rect x="87.5" y="33.5" width="9" height="9" fill="#008000" stroke="#fff" stroke-width="1" shape-rendering="crispEdges"/>
<text x="101" y="42" fill="#008000" stroke="#008000">Temp. I.*</text>
<rect x="182.5" y="33.5" width="9" height="9" fill="#ff0000" stroke="#fff" stroke-width="1" shape-rendering="crispEdges"/>
<text x="196" y="42" fill="#008000" stroke="#008000">Temp. A.*</text>
<rect x="277.5" y="33.5" width="9" height="9" fill="#000000" stroke="#fff" stroke-width="1" shape-rendering="crispEdges"/>
<text x="291" y="42" fill="#008000" stroke="#008000">B +5cm</text>
<rect x="372.5" y="33.5" width="9" height="9" fill="#004000" stroke="#fff" stroke-width="1" shape-rendering="crispEdges"/>
<text x="386" y="42" fill="#008000" stroke="#008000">B -5cm</text>
<rect x="467.5" y="33.5" width="9" height="9" fill="#008000" stroke="#fff" stroke-width="1" shape-rendering="crispEdges"/>
<text x="481" y="42" fill="#008000" stroke="#008000">B -10cm</text>
<rect x="562.5" y="33.5" width="9" height="9" fill="#10dc10" stroke="#fff" stroke-width="1" shape-rendering="crispEdges"/>
<text x="576" y="42" fill="#008000" stroke="#008000">B -20cm</text>
<rect x="657.5" y="33.5" width="9" height="9" fill="#80ff80" stroke="#fff" stroke-width="1" shape-rendering="crispEdges"/>
<text x="671" y="42" fill="#008000" stroke="#008000">B -50cm</text>
<rect x="752.5" y="33.5" width="9" height="9" fill="#00ffff" stroke="#fff" stroke-width="1" shape-rendering="crispEdges"/>
<text x="766" y="42" fill="#00ffff" stroke="#00ffff">Feuchte A.*</text>
<rect x="847.5" y="33.5" width="9" height="9" fill="#000000" stroke="#fff" stroke-width="1" shape-rendering="crispEdges"/>
<text x="861" y="42" fill="#000000" stroke="#000000">Regen*</text>
<rect x="942.5" y="33.5" width="9" height="9" fill="#ffffff" stroke="#fff" stroke-width="1" shape-rendering="crispEdges"/>
<text x="956" y="42" fill="#ffffff" stroke="#ffffff">Wind*</text>
<rect x="1037.5" y="33.5" width="9" height="9" fill="#0000ff" stroke="#fff" stroke-width="1" shape-rendering="crispEdges"/>
<text x="1051" y="42" fill="#ffffff" stroke="#ffffff">Windböen</text>
<rect x="87.5" y="47.5" width="9" height="9" fill="#808040" stroke="#fff" stroke-width="1" shape-rendering="crispEdges"/>
<text x="101" y="56" fill="#00ffff" stroke="#00ffff" textLength="42" lengthAdjust="spacingAndGlyphs">Empfang</text>
</g>
<g id="icons">
<path d="M400.5 732h3v4h2l-3.5 5-3.5-5h2z" fill="#fff000"/>
<path d="M403.5 732v4h2l-3.5 5" fill="none" stroke="#111" stroke-width="0.9"/>
<rect x="398.3" y="734" width="1" height="1" fill="#3040c0"/><rect x="408" y="739" width="1" height="1" fill="#3040c0"/>
<path d="M403 743.3v-1.6q.6-2.7 3-2.7t3 2.7v1.6z" fill="#fff"/>
<rect x="1124" y="732" width="6" height="6" fill="#2838b8"/>
<circle cx="1127" cy="735" r="3.1" fill="#fff"/>
<path d="M1131.5 734l3.5 6h-2v3h-3v-3h-2z" fill="#fff000"/>
<path d="M1131.5 734l-3.5 6h2" fill="none" stroke="#111" stroke-width="0.9"/>
</g>
<g id="panel">
<rect x="0" y="744" width="1280" height="73" fill="#ccfbf7"/>
<g shape-rendering="crispEdges">
<rect x="0" y="744" width="1280" height="1" fill="#fff"/>
<rect x="0" y="744" width="1" height="73" fill="#fff"/>
<rect x="1279" y="744" width="1" height="73" fill="#606060"/>
<rect x="88" y="745" width="1" height="72" fill="#808080"/>
<rect x="87" y="745" width="1" height="72" fill="#fff"/>
<rect x="205" y="745" width="1" height="72" fill="#808080"/>
<rect x="204" y="745" width="1" height="72" fill="#fff"/>
<rect x="323" y="745" width="1" height="72" fill="#808080"/>
<rect x="322" y="745" width="1" height="72" fill="#fff"/>
<rect x="441" y="745" width="1" height="72" fill="#808080"/>
<rect x="440" y="745" width="1" height="72" fill="#fff"/>
<rect x="559" y="745" width="1" height="72" fill="#808080"/>
<rect x="558" y="745" width="1" height="72" fill="#fff"/>
<rect x="677" y="745" width="1" height="72" fill="#808080"/>
<rect x="676" y="745" width="1" height="72" fill="#fff"/>
<rect x="795" y="745" width="1" height="72" fill="#808080"/>
<rect x="794" y="745" width="1" height="72" fill="#fff"/>
<rect x="913" y="745" width="1" height="72" fill="#808080"/>
<rect x="912" y="745" width="1" height="72" fill="#fff"/>
</g>
<text class="b" x="8.3" y="763" fill="#000" stroke="#000" textLength="39" lengthAdjust="spacingAndGlyphs">Sensor</text>
<text class="b" x="8.3" y="779" fill="#000" stroke="#000" textLength="47.5" lengthAdjust="spacingAndGlyphs">MinWert</text>
<text class="b" x="8.3" y="795" fill="#000" stroke="#000" textLength="50.5" lengthAdjust="spacingAndGlyphs">MaxWert</text>
<text class="b" x="8.3" y="811" fill="#000" stroke="#000" textLength="72.5" lengthAdjust="spacingAndGlyphs">Durchschnitt</text>
<text class="b" x="95.0" y="763" fill="#000" stroke="#000">Temp. A.</text>
<text class="b" x="198.5" y="763" text-anchor="end" fill="#000" stroke="#000">°C</text>
<text class="p" x="100.5" y="779" fill="#000" stroke="#000">04:50</text>
<text class="p" x="198.5" y="779" text-anchor="end" fill="#000" stroke="#000">15.8</text>
<text class="p" x="100.5" y="795" fill="#000" stroke="#000">14:20</text>
<text class="p" x="198.5" y="795" text-anchor="end" fill="#000" stroke="#000">26.6</text>
<text class="p" x="198.5" y="811" text-anchor="end" fill="#000" stroke="#000">20.67</text>
<text class="b" x="213.0" y="763" fill="#000" stroke="#000">Temp. I.</text>
<text class="b" x="316.5" y="763" text-anchor="end" fill="#000" stroke="#000">°C</text>
<text class="p" x="218.5" y="779" fill="#000" stroke="#000">06:45</text>
<text class="p" x="316.5" y="779" text-anchor="end" fill="#000" stroke="#000">25.0</text>
<text class="p" x="218.5" y="795" fill="#000" stroke="#000">14:55</text>
<text class="p" x="316.5" y="795" text-anchor="end" fill="#000" stroke="#000">27.5</text>
<text class="p" x="316.5" y="811" text-anchor="end" fill="#000" stroke="#000">26.03</text>
<text class="b" x="684.5" y="763" fill="#000" stroke="#000">Luftdruck</text>
<text class="b" x="788.5" y="763" text-anchor="end" fill="#000" stroke="#000">hPa</text>
<text class="p" x="691.0" y="779" fill="#000" stroke="#000">14:20</text>
<text class="p" x="789.5" y="779" text-anchor="end" fill="#000" stroke="#000">1009.2</text>
<text class="p" x="691.0" y="795" fill="#000" stroke="#000">23:35</text>
<text class="p" x="789.5" y="795" text-anchor="end" fill="#000" stroke="#000">1015.8</text>
<text class="p" x="683" y="811" fill="#000" stroke="#000" textLength="52.5" lengthAdjust="spacingAndGlyphs">^1.2hPa/h</text>
<text class="p" x="789.5" y="811" text-anchor="end" fill="#000" stroke="#000">1011.0</text>
<text class="b" x="803.0" y="763" fill="#000" stroke="#000">Regen</text>
<text class="b" x="905.0" y="763" text-anchor="end" fill="#000" stroke="#000">l/m²</text>
<text class="p" x="808.5" y="795" fill="#000" stroke="#000">00:00</text>
<text class="p" x="906.0" y="795" text-anchor="end" fill="#000" stroke="#000">0.0</text>
<text class="p" x="803.0" y="811" fill="#000" stroke="#000">Gesamt:</text>
<text class="p" x="906.0" y="811" text-anchor="end" fill="#000" stroke="#000">0.0</text>
<text class="b" x="920.5" y="763" fill="#000" stroke="#000">Wind</text>
<text class="b" x="1021.0" y="763" text-anchor="end" fill="#000" stroke="#000">km/h</text>
<text class="p" x="921.0" y="779" fill="#000" stroke="#000">Ø 10 min.</text>
<text class="p" x="1022.0" y="779" text-anchor="end" fill="#000" stroke="#000">0.0</text>
<text class="p" x="927.0" y="795" fill="#000" stroke="#000">13:30</text>
<text class="p" x="1022.0" y="795" text-anchor="end" fill="#000" stroke="#000">NO 11.7</text>
<text class="p" x="1022.0" y="811" text-anchor="end" fill="#000" stroke="#000">0.8</text>
</g>
</svg></body></html>
